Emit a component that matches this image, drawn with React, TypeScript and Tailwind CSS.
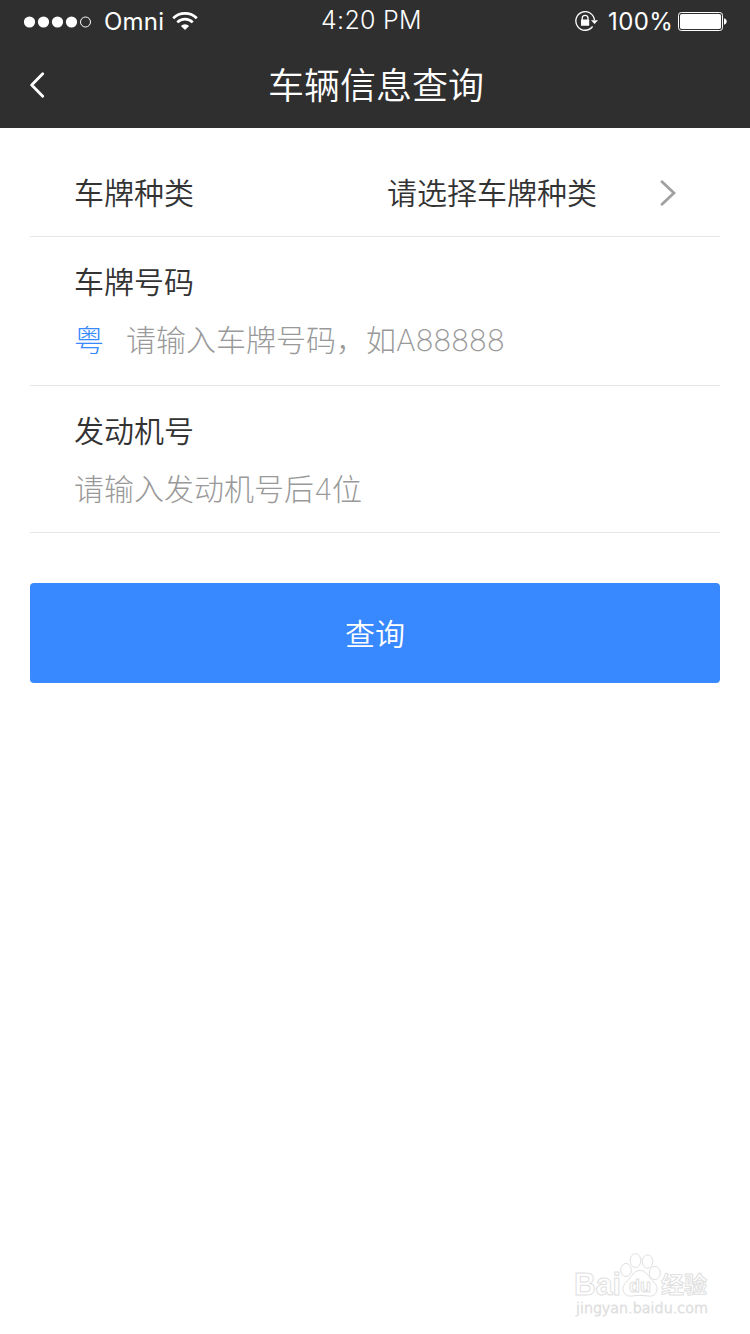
import type { ReactNode } from 'react'

function SignalDots() {
  return (
    <svg width="68" height="12" viewBox="0 0 68 12" fill="#fff">
      {[5.5, 19.5, 33.5, 47.5].map((cx) => (
        <circle key={cx} cx={cx} cy="6" r="5.6" />
      ))}
      <circle cx="61.5" cy="6" r="5" fill="none" stroke="#fff" strokeWidth="1" />
    </svg>
  )
}

function WifiIcon() {
  return (
    <svg width="26" height="18" viewBox="0 0 26 18" fill="none" stroke="#fff" strokeWidth="2.7" className="-mt-0.5">
      <path d="M1.2 6.2a16.8 16.8 0 0 1 23.6 0" />
      <path d="M5.3 10.4a10.9 10.9 0 0 1 15.4 0" />
      <path d="M13 18l-4.1-4.1a5.8 5.8 0 0 1 8.2 0z" fill="#fff" stroke="none" />
    </svg>
  )
}

function RotationLockIcon() {
  return (
    <svg width="24" height="20" viewBox="0 0 24 20" fill="none" stroke="#fff" className="-mt-px">
      <path d="M19.4 9A9.3 9.3 0 1 0 17.6 15.5" strokeWidth="1.3" />
      <path d="M16 9.2h7l-3.5 3.9z" fill="#fff" stroke="none" />
      <path d="M7.2 9V7.3a2.9 2.9 0 0 1 5.8 0V9" strokeWidth="1.3" />
      <rect x="6" y="8.6" width="8.2" height="6.2" rx="0.6" fill="#fff" stroke="none" />
    </svg>
  )
}

function BatteryIcon() {
  return (
    <svg width="49" height="19" viewBox="0 0 49 19" fill="#fff">
      <rect x="0.5" y="0.5" width="44" height="18" rx="2.8" fill="none" stroke="#fff" />
      <rect x="2" y="2" width="41" height="15" rx="1.8" />
      <path d="M46 6.3c1.6.4 2.7 1.6 2.7 3.2s-1.1 2.8-2.7 3.2z" />
    </svg>
  )
}

function StatusBar() {
  return (
    <div className="flex h-10 items-center pt-[3px] pl-6 font-['Inter',sans-serif] text-2xl leading-6 font-normal">
      <div className="flex w-[297px] items-center">
        <SignalDots />
        <span className="ml-3 w-[68px] tracking-[0.2px]">Omni</span>
        <WifiIcon />
      </div>
      <span className="-mt-[3px] w-[254px] text-[25px] font-light tracking-[0.3px]">4:20 PM</span>
      <RotationLockIcon />
      <span className="ml-[9px] w-[70px] tracking-[0.4px]">100%</span>
      <BatteryIcon />
    </div>
  )
}

function Field({ label, children }: { label: string; children: ReactNode }) {
  return (
    <div className="border-b border-[#e6e6e6] pt-7 pl-[44px]">
      <div className="leading-[30px] text-[#333]">{label}</div>
      <div className="mt-7 flex leading-[30px] font-light text-[#999]">{children}</div>
    </div>
  )
}

function Watermark() {
  return (
    <div className="mt-auto mr-[40px] mb-[12px] self-end font-['Liberation_Sans','Noto_Sans_CJK_SC',sans-serif]">
      <svg width="136" height="70" viewBox="0 0 136 70" fill="#fff" stroke="#e0e0e0" strokeLinejoin="round">
        <text x="0" y="43" fontSize="31" fontWeight="700" textLength="47" lengthAdjust="spacingAndGlyphs">Bai</text>
        <ellipse cx="52" cy="18" rx="5.3" ry="6.6" />
        <ellipse cx="61.5" cy="8.5" rx="5.3" ry="7" />
        <ellipse cx="73.5" cy="9.5" rx="5.3" ry="6.6" />
        <ellipse cx="80.8" cy="21" rx="5.5" ry="6.6" />
        <path d="M66 18.5c-5 0-7 3.5-10 7.5-3 3.5-8 7-7 12 1 5 5 6.5 9 6 5-.7 11-.7 16 0 5 .5 8-1 9-6 1-5-4-8.5-7-12-3-4-5-7.5-10-7.5z" />
        <text x="55" y="39.5" fontSize="19" fontWeight="700" textLength="22" lengthAdjust="spacingAndGlyphs">du</text>
        <text x="87" y="41" fontSize="23" fontWeight="700" textLength="46">经验</text>
        <text x="2" y="61" fontSize="14" textLength="132" lengthAdjust="spacingAndGlyphs" strokeWidth="0.9" className="font-['DejaVu_Sans',sans-serif]">jingyan.baidu.com</text>
      </svg>
    </div>
  )
}

export default function App() {
  return (
    <div className="flex h-[1334px] w-[750px] flex-col bg-white font-['Noto_Sans_CJK_SC',sans-serif] text-[30px] font-[350]">
      <header className="bg-[#2f2f2f] text-white">
        <StatusBar />
        <div className="flex h-[88px] items-center pl-[30px]">
          <svg width="16" height="26" viewBox="0 0 16 26" fill="none" stroke="#fff" strokeWidth="2.8" strokeLinecap="round" strokeLinejoin="round" className="mt-px">
            <path d="M12.7 1.8L1.7 13l11 11.2" />
          </svg>
          <h1 className="w-[660px] pb-0.5 text-center text-[36px] leading-[40px]">车辆信息查询</h1>
        </div>
      </header>

      <main className="px-[30px]">
        <div className="flex h-[109px] items-center border-b border-[#e6e6e6] pt-5 pl-[44px] text-[#333]">
          <span className="w-[313px] pb-0.5 leading-[30px]">车牌种类</span>
          <span className="w-[273px] pb-0.5 leading-[30px]">请选择车牌种类</span>
          <svg width="16" height="26" viewBox="0 0 16 26" fill="none" stroke="#a0a0a0" strokeWidth="2.8" strokeLinecap="round" className="mt-px">
            <path d="M2 1.8L14 13 2 24.2" />
          </svg>
        </div>
        <Field label="车牌号码">
          <span className="w-[52px] text-[#3888ff]">粤</span>
          <span className="h-[62px]">
            请输入车牌号码，如<span className="font-['Inter',sans-serif] leading-none font-extralight tracking-[-0.3px]">A88888</span>
          </span>
        </Field>
        <Field label="发动机号">
          <span className="h-[60px]">
            请输入发动机号后<span className="font-['Inter',sans-serif] leading-none font-extralight tracking-[-0.3px]">4</span>位
          </span>
        </Field>
        <button className="mt-[50px] h-[100px] w-full rounded bg-[#3888ff] pb-0.5 text-white">查询</button>
      </main>

      <Watermark />
    </div>
  )
}
